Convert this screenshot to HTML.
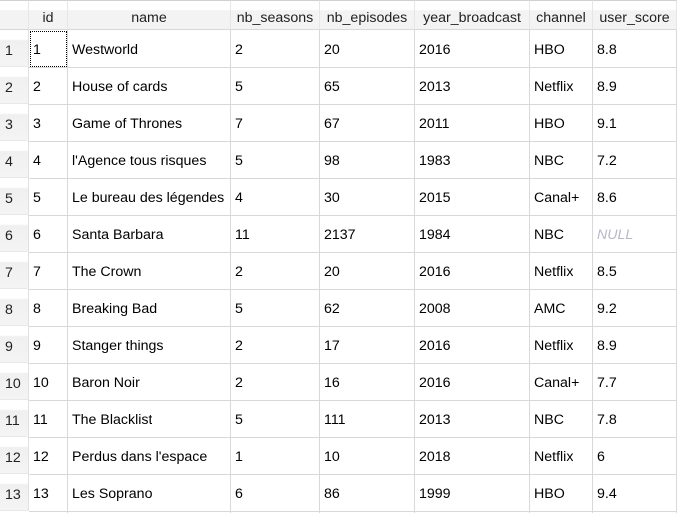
<!DOCTYPE html>
<html><head><meta charset="utf-8"><style>
body{margin:0;width:677px;height:513px;background:#fff;overflow:hidden;font-family:"Liberation Sans",sans-serif;font-size:14.2px;color:#000;position:relative}
.c{position:absolute;box-sizing:border-box;white-space:nowrap;line-height:37px;height:37px;padding-left:4px;padding-top:2px;overflow:hidden}
.h{position:absolute;top:0;height:30px;line-height:34px;text-align:center;background:linear-gradient(#fff 0,#fff 30%,#f3f3f3 35%,#f3f3f3 100%);border-top:1px solid #d0d0d0;border-right:1px solid #e6e6e6;border-bottom:1px solid #d8d8d8;box-sizing:border-box;color:#222}
.r{position:absolute;left:0;width:29px;height:37px;line-height:37px;padding-top:3px;padding-left:5px;box-sizing:border-box;background:linear-gradient(#fff 0,#fff 25%,#f0f0f0 30%,#f4f4f4 100%);border-right:1px solid #e0e0e0;border-bottom:1px solid #e8e8e8;color:#222}
.vl{position:absolute;top:30px;bottom:0;width:1px;background:#d8d8d8}
.hl{position:absolute;left:29px;width:648px;height:1px;background:#d8d8d8}
.null{color:#b8b8c8;font-style:italic}
</style></head><body>
<div class="h" style="left:0;width:29px"></div>
<div class="h" style="left:29px;width:39px">id</div>
<div class="h" style="left:68px;width:163px">name</div>
<div class="h" style="left:231px;width:89px">nb_seasons</div>
<div class="h" style="left:320px;width:95px">nb_episodes</div>
<div class="h" style="left:415px;width:115px">year_broadcast</div>
<div class="h" style="left:530px;width:63px">channel</div>
<div class="h" style="left:593px;width:84px">user_score</div>
<div class="vl" style="left:67px"></div><div class="vl" style="left:230px"></div><div class="vl" style="left:319px"></div><div class="vl" style="left:414px"></div><div class="vl" style="left:529px"></div><div class="vl" style="left:592px"></div><div class="vl" style="left:676px"></div>
<div style="position:absolute;left:30px;top:31px;width:37px;height:36px;box-sizing:border-box;border:1px dotted #000"></div>
<div id="rows"></div>
<script>
var d=[[1,"Westworld",2,20,2016,"HBO","8.8"],[2,"House of cards",5,65,2013,"Netflix","8.9"],[3,"Game of Thrones",7,67,2011,"HBO","9.1"],[4,"l'Agence tous risques",5,98,1983,"NBC","7.2"],[5,"Le bureau des légendes",4,30,2015,"Canal+","8.6"],[6,"Santa Barbara",11,2137,1984,"NBC",null],[7,"The Crown",2,20,2016,"Netflix","8.5"],[8,"Breaking Bad",5,62,2008,"AMC","9.2"],[9,"Stanger things",2,17,2016,"Netflix","8.9"],[10,"Baron Noir",2,16,2016,"Canal+","7.7"],[11,"The Blacklist",5,111,2013,"NBC","7.8"],[12,"Perdus dans l'espace",1,10,2018,"Netflix","6"],[13,"Les Soprano",6,86,1999,"HBO","9.4"]];
var xs=[29,68,231,320,415,530,593],h="";
d.forEach(function(r,i){var t=30+i*37;h+='<div class="r" style="top:'+t+'px">'+(i+1)+'</div>';
r.forEach(function(v,j){h+='<div class="c" style="top:'+t+'px;left:'+xs[j]+'px">'+(v===null?'<span class="null">NULL</span>':v)+'</div>'});
h+='<div class="hl" style="top:'+(t+37)+'px"></div>'});
document.getElementById("rows").innerHTML=h;
</script>
</body></html>
